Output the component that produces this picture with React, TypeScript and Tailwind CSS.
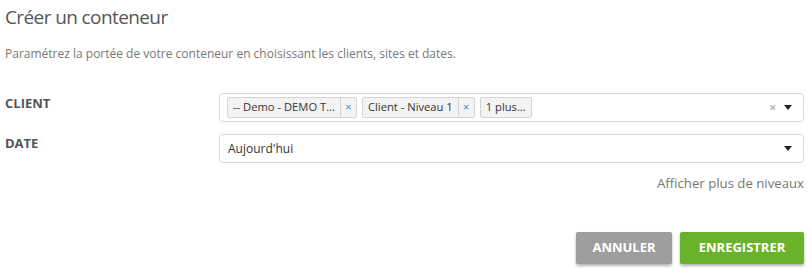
import React from 'react';

const Caret = () => (
  <svg width="8" height="5" viewBox="0 0 8 5" className="text-[#222]">
    <path d="M0 0 H8 L4 5 Z" fill="currentColor" />
  </svg>
);

const Tag = ({ label, removable = true }: { label: string; removable?: boolean }) => (
  <div className="flex h-[21px] items-stretch rounded-[2px] border border-[#d4d4d4] bg-[#f3f3f3] text-[11.2px] text-[#333]">
    <span className="flex items-center px-[5px]">{label}</span>
    {removable && (
      <span className="flex w-[16px] items-center justify-center border-l border-[#d4d4d4] text-[11px] text-[#3a8fc9]">
        ×
      </span>
    )}
  </div>
);

export default function App() {
  return (
    <div className="h-[274px] w-[812px] bg-white pl-[5px] pr-[8px] font-['Open_Sans',sans-serif] text-[#555]">
      <h1 className="pt-[3px] text-[19px] leading-[28px] tracking-[-0.6px] text-[#555]">Créer un conteneur</h1>
      <p className="mt-[15px] text-[12px] leading-[16px] text-[#777]">
        Paramétrez la portée de votre conteneur en choisissant les clients, sites et dates.
      </p>

      <div className="mt-[31px] flex flex-col gap-[12px]">
        <div className="flex">
          <label className="w-[214px] pt-[1px] text-[13px] font-bold leading-[18px] text-[#555]">CLIENT</label>
          <div className="flex h-[29px] flex-1 items-center rounded-[4px] border border-[#dadada] pl-[7px] pr-[11px]">
            <div className="flex flex-1 items-center gap-[5px]">
              <Tag label="-- Demo - DEMO T..." />
              <Tag label="Client - Niveau 1" />
              <Tag label="1 plus..." removable={false} />
            </div>
            <span className="mr-[8px] text-[12px] text-[#8a9a8a]">×</span>
            <Caret />
          </div>
        </div>

        <div className="flex">
          <label className="w-[214px] text-[13px] font-bold leading-[18px] text-[#555]">DATE</label>
          <div className="flex h-[29px] flex-1 items-center rounded-[4px] border border-[#dadada] pl-[8px] pr-[11px]">
            <span className="flex-1 text-[12px] text-[#333]">Aujourd'hui</span>
            <Caret />
          </div>
        </div>
      </div>

      <div className="mt-[11px] flex justify-end">
        <span className="text-[13.2px] leading-[18px] text-[#777]">Afficher plus de niveaux</span>
      </div>

      <div className="mt-[40px] flex justify-end gap-[8px]">
        <button className="h-[32px] w-[96px] rounded-[2px] bg-[#9e9e9e] text-[13px] font-bold text-white shadow-[0_2px_3px_rgba(0,0,0,0.3)]">
          ANNULER
        </button>
        <button className="h-[32px] w-[124px] rounded-[2px] bg-[#69b22a] text-[13px] font-bold text-white shadow-[0_2px_3px_rgba(0,0,0,0.3)]">
          ENREGISTRER
        </button>
      </div>
    </div>
  );
}
